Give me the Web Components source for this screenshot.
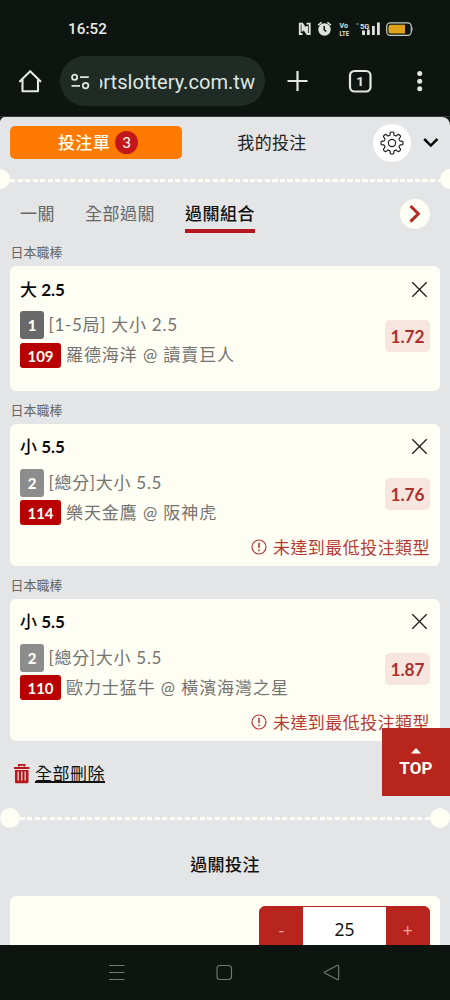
<!DOCTYPE html>
<html lang="zh-Hant">
<head>
<meta charset="utf-8">
<title>投注單</title>
<style>
html,body{margin:0;padding:0;background:#0e1511}
body{width:450px;height:1000px;overflow:hidden;font-family:Lato,"Noto Sans CJK TC",sans-serif}
</style>
</head>
<body>
<phone-screen>
  <status-bar slot="top"></status-bar>
  <browser-bar slot="top"></browser-bar>
  <slip-header count="3"></slip-header>
  <perforated-line edge="0"></perforated-line>
  <mode-tabs></mode-tabs>
  <bet-card league="日本職棒" pick="大 2.5" no="1" tone="#696969" code="109" odds="1.72">
    <span slot="market">[1-5局] 大小 2.5</span><span slot="match">羅德海洋 @ 讀賣巨人</span>
  </bet-card>
  <bet-card league="日本職棒" pick="小 5.5" no="2" tone="#8d8d8d" code="114" odds="1.76" warn="未達到最低投注類型">
    <span slot="market">[總分]大小 5.5</span><span slot="match">樂天金鷹 @ 阪神虎</span>
  </bet-card>
  <bet-card league="日本職棒" pick="小 5.5" no="2" tone="#8d8d8d" code="110" odds="1.87" warn="未達到最低投注類型">
    <span slot="market">[總分]大小 5.5</span><span slot="match">歐力士猛牛 @ 橫濱海灣之星</span>
  </bet-card>
  <delete-all>全部刪除</delete-all>
  <perforated-line edge="10"></perforated-line>
  <stake-panel value="25">過關投注</stake-panel>
  <top-button slot="float">TOP</top-button>
  <nav-bar slot="bottom"></nav-bar>
</phone-screen>
<script>
const define = (name, render) => customElements.define(name, class extends HTMLElement {
  constructor(){ super(); this.attachShadow({mode:'open'}); }
  connectedCallback(){ this.shadowRoot.innerHTML = '<style>*{box-sizing:border-box}:host{box-sizing:border-box}</style>' + render(n => this.getAttribute(n) || ''); }
});

define('phone-screen', () => `
<style>
:host{display:flex;flex-direction:column;width:450px;height:1000px;position:relative;background:#0e1511}
main{height:828px;background:#e3e5e7;overflow:hidden;border-radius:5px 8px 0 0;display:flex;flex-direction:column}
.edge{height:1px;background:#343a37}
</style>
<slot name="top"></slot><div class="edge"></div><main><slot></slot></main><slot name="bottom"></slot><slot name="float"></slot>`);

define('status-bar', () => `
<style>
:host{display:flex;height:58px;align-items:center;padding:0 33px 0 68px;color:#e8ece9;font:500 15.2px Roboto,sans-serif}
.t{flex:1;letter-spacing:.1px}
svg{display:block}
</style>
<span class="t">16:52</span>
<svg width="119" height="16" viewBox="0 0 119 16" fill="none">
<path d="M4.500 13H1.800V2.600h2.400l4.800 7V5M8.500 2.600h3.200V13H9.400L4.400 6v4.500" stroke="#dde2de" stroke-width="1.900"/>
<g fill="#dde2de"><circle cx="26.500" cy="8.500" r="6.200"/><path d="M20.100 4.100l3.500-2.800M32.900 4.100l-3.500-2.800" stroke="#dde2de" stroke-width="1.500"/><path d="M26.200 5v3.700l2 1.800" stroke="#0e1511" stroke-width="1.500" fill="none"/>
<text x="41.500" y="6.800" font-family="Roboto" font-weight="700" font-size="6.800" textLength="8.500" lengthAdjust="spacingAndGlyphs">Vo</text><text x="41.500" y="14.500" font-family="Roboto" font-weight="700" font-size="6.800" textLength="9.500" lengthAdjust="spacingAndGlyphs">LTE</text>
<path d="M58 2h3v2h-3z" opacity=".3"/><text x="62" y="7.500" font-family="Roboto" font-weight="700" font-size="8" textLength="9.500" lengthAdjust="spacingAndGlyphs">5G</text>
<path d="M64 9.500h3V14h-3zM69 8.500h2.800V14H69zM74 5h2.800v9H74zM79 1.500h2.800V14H79z"/></g>
<rect x="88.700" y="1.800" width="24.600" height="12.600" rx="3.600" stroke="#c7ccc8" stroke-width="1.200"/><path d="M92.500 3.700H107v8.800H92.500q-2 0-2-2V5.700q0-2 2-2z" fill="#e0a21b"/><path d="M114 6q1.400 2 0 4.300z" fill="#dde2de"/>
</svg>`);

define('browser-bar', () => `
<style>
:host{display:flex;height:58px;align-items:flex-start;color:#e3e8e4}
svg{display:block;flex:none}
.home{margin:11px 17px 0 18px}
.url{display:flex;flex:none;align-items:center;width:205px;height:50px;margin-top:-2px;border-radius:25px;background:#202b25;padding:1px 10px 0 10px}
.clip{width:155px;margin-left:9px;overflow:hidden;display:flex;justify-content:flex-end;font:400 20.1px/26px Roboto,sans-serif;white-space:nowrap;color:#dfe6e0}
.acts{display:block;margin:10px 0 0 21px}
</style>
<svg class="home" width="25" height="25" viewBox="0 0 25 25" fill="none" stroke="#e3e8e4" stroke-width="2.100" stroke-linejoin="round" stroke-linecap="round"><path d="M4.500 11V22.200H20V11M2 12.300L12.200 2.200 22.400 12.300"/></svg>
<div class="url"><svg width="21" height="18" viewBox="0 0 21 18" fill="none" stroke="#dfe6e0" stroke-width="1.800"><circle cx="4.600" cy="4.200" r="2.600"/><path d="M10 4.200h8.800M1.500 12.800h8.500"/><circle cx="15.600" cy="12.600" r="2.800"/></svg><div class="clip"><span>ortslottery.com.tw</span></div></div>
<svg class="acts" width="150" height="26" viewBox="0 0 150 26"><g fill="none" stroke="#e3e8e4"><path d="M1.500 13h20M11.500 3v20" stroke-width="2.200"/><rect x="64" y="3" width="20.500" height="20.500" rx="4.500" stroke-width="2.200"/></g><text x="74.200" y="18" text-anchor="middle" font-family="Roboto" font-weight="700" font-size="13.500" fill="#e3e8e4">1</text><g fill="#e3e8e4"><circle cx="133.700" cy="5.500" r="2.500"/><circle cx="133.700" cy="13.200" r="2.500"/><circle cx="133.700" cy="20.700" r="2.500"/></g></svg>`);

define('slip-header', a => `
<style>
:host{display:flex;flex:none;height:52px;padding:9px 10px 0;align-items:flex-start;font-size:17px;letter-spacing:.35px}
.on{display:flex;align-items:center;justify-content:center;width:172px;height:33px;background:#ff7a00;color:#fffef4;border-radius:5px;gap:5px;padding-left:4px}
.on span{line-height:32px;font-weight:500}
b{width:23px;height:23px;border-radius:50%;background:#c3161a;font:400 15px/22px Lato;text-align:center;letter-spacing:0}
.off{width:180px;text-align:center;line-height:33px;color:#222}
.gear{width:38px;height:38px;border-radius:50%;background:#fff;display:flex;align-items:center;justify-content:center;margin:-2px 0 0 11px}
.chev{margin:11px 0 0 12px}
</style>
<div class="on"><span>投注單</span><b>${a('count')}</b></div><div class="off">我的投注</div>
<div class="gear"><svg width="26" height="26" viewBox="-13 -13 26 26" fill="none" stroke="#222" stroke-width="1.200" stroke-linejoin="round"><circle r="3.600"/><path id="g"/></svg></div>
<svg class="chev" width="16" height="12" viewBox="0 0 16 12" fill="none" stroke="#0b0b0b" stroke-width="2.500"><path d="M1.200 2l6.600 6.600L14.400 2"/></svg>`);

define('perforated-line', a => `
<style>
:host{display:flex;height:20px;align-items:center;margin:0 ${+a('edge') - 10}px;flex:none}
i{width:20px;height:20px;border-radius:50%;background:#fffef4;flex:none}
u{flex:1;height:3px;margin-top:2px;background:repeating-linear-gradient(90deg,#fffef4 0 5px,transparent 5px 7.500px)}
</style><i></i><u></u><i></i>`);

define('mode-tabs', () => `
<style>
:host{display:flex;flex:none;height:55px;padding:10px 20px 0 20px;align-items:flex-start;font-size:17px;letter-spacing:.5px;color:#666;line-height:30px}
span{height:34px;margin-right:30px}
.on{color:#111;font-weight:500;height:34px;border-bottom:4px solid #b5171c;width:70px;margin:0;white-space:nowrap}
.next{width:30px;height:30px;border-radius:50%;background:#fffef4;display:flex;align-items:center;justify-content:center;margin:0 0 0 auto}
</style>
<span>一關</span><span>全部過關</span><span class="on">過關組合</span>
<div class="next"><svg width="14" height="20" viewBox="0 0 14 20" fill="none" stroke="#b32a25" stroke-width="3"><path d="M2.500 2l7.800 7.800L2.500 17.600"/></svg></div>`);

define('bet-card', a => `
<style>
:host{display:block;padding:0 10px;flex:none}
.lg{font-size:13px;line-height:16px;color:#666;margin:0 .5px 4px;height:18px}
.card{height:${a('warn') ? 142 : 125}px;background:#fffef4;border-radius:6px;padding:10px 10px 0;margin-bottom:${a('warn') ? 11 : 10.500}px}
.head{display:flex;justify-content:space-between;align-items:center;height:26px;font-size:17px;font-weight:700;color:#0a0a0a}
.head>span{padding-bottom:2px}
.head b{font-weight:500}.head em{font-style:normal;font-weight:700}
.head svg{margin-right:2px}
.mid{display:flex;justify-content:space-between;margin-top:8px;height:60px}
.row{display:flex;align-items:center;height:30px;white-space:nowrap;font-size:17px;letter-spacing:.72px;color:#737370}
.row.m{letter-spacing:.92px}
.row span{display:block}
slot{display:block;padding-bottom:3px}
.no{width:24px;height:28px;line-height:29px;font-size:15px;font-weight:900;color:#fffef4;text-align:center;border-radius:3px;letter-spacing:0;margin-right:4.500px}
.code{width:41px;height:25px;line-height:26px;font-size:15px;font-weight:700;color:#fffef4;background:#b80000;text-align:center;border-radius:3px;letter-spacing:0;margin-right:5px}
.odds{width:45px;height:32px;margin-top:10px;border-radius:5px;background:#f7e5e0;color:#a9302c;font-weight:700;font-size:17.300px;line-height:33px;text-align:center}
.warn{display:flex;justify-content:flex-end;align-items:center;height:24px;margin-top:7px;color:#b53b37;font-size:17px;letter-spacing:.45px;gap:6px}
</style>
<div class="lg">${a('league')}</div>
<div class="card">
<div class="head"><span><b>${a('pick').split(' ')[0]}</b> <em>${a('pick').split(' ')[1]}</em></span><svg width="17" height="17" viewBox="0 0 17 17" stroke="#1c1c1c" stroke-width="1.300"><path d="M1.300 1.300l14.400 14.400M15.700 1.300L1.300 15.700"/></svg></div>
<div class="mid"><div><div class="row"><span class="no" style="background:${a('tone')}">${a('no')}</span><slot name="market"></slot></div><div class="row m"><span class="code">${a('code')}</span><slot name="match"></slot></div></div>
<div class="odds">${a('odds')}</div></div>
${a('warn') ? `<div class="warn"><svg width="16" height="16" viewBox="0 0 16 16" fill="none" stroke="#b53b37" stroke-width="1.200"><circle cx="8" cy="8" r="7"/><path d="M8 3.800v5.200M8 10.500v1.700" stroke-width="1.600"/></svg><span>${a('warn')}</span></div>` : ''}
</div>`);

define('delete-all', () => `
<style>
:host{display:flex;height:56px;padding:7px 0 0 14px;gap:5px;align-items:flex-start;font-size:17px;letter-spacing:.5px;color:#111;flex:none}
svg{margin-top:5px}
span{line-height:30px;text-decoration:underline;text-decoration-thickness:1.500px;text-underline-offset:1px;text-decoration-skip-ink:none}
</style>
<svg width="16" height="20" viewBox="0 0 16 20"><path d="M5 2.500V.8h5.500v1.700M0 4h15.500" fill="none" stroke="#b5171c" stroke-width="2"/><path d="M1 6h13.500v12q0 1.300-1.300 1.300H2.300Q1 19.300 1 18z" fill="#b5171c"/><path d="M4.200 7.500v9M7.700 7.500v9M11.200 7.500v9" stroke="#f0d9d6" stroke-width="1.300"/></svg><span><slot></slot></span>`);

define('stake-panel', a => `
<style>
:host{display:block;padding:21px 10px 0;flex:none}
h3{margin:0;font-size:17px;font-weight:500;letter-spacing:.4px;line-height:31px;height:30px;text-align:center;color:#111}
.card{height:90px;margin-top:17px;background:#fffef4;border-radius:6px;display:flex;justify-content:flex-end;padding:10px 10px 0}
.step{display:flex;width:171px;height:48px;border:1px solid #b7251e;border-radius:6px;background:#b7251e;overflow:hidden;color:#e9a8a2;font:400 17px/48px Lato;text-align:center}
.step span{width:43px}
.step b{width:84px;background:#fff;color:#151515;font:400 17.500px/44px "Noto Sans"}
</style>
<h3><slot></slot></h3><div class="card"><div class="step"><span>-</span><b>${a('value')}</b><span>+</span></div></div>`);

define('top-button', () => `
<style>
:host{position:absolute;left:382px;top:728px;width:68px;height:68px;background:#b7251d;color:#fffef4;display:flex;flex-direction:column;align-items:center;font:700 17px/20px Roboto,sans-serif;letter-spacing:.1px}
svg{margin:19px 0 4px}
</style><svg width="10" height="7" viewBox="0 0 10 7"><path d="M0 6.500L5 1l5 5.500z" fill="#fffef4"/></svg><span><slot></slot></span>`);

define('nav-bar', () => `
<style>
:host{display:flex;height:55px;background:#0e1511;flex:none}
svg{display:block}
</style><svg width="450" height="55" viewBox="0 0 450 55" fill="none" stroke="#737875" stroke-width="1.100"><path d="M109 20.500h15.500M109 27.500h15.500M109 34.500h15.500"/><rect x="217" y="20.500" width="14.500" height="14" rx="3"/><path d="M324.800 27q-.6.500 0 1l12.200 6.500q1.700.5 1.700-1v-12q0-1.500-1.700-1z"/></svg>`);

/* Gear outline: eight rounded teeth traced around a circle */
const gear = document.querySelector('slip-header').shadowRoot.getElementById('g');
const pts = [];
for (let i = 0; i < 160; i++) {
  const t = i / 160 * Math.PI * 2, r = 9.500 + 1.500 * Math.tanh(3 * Math.cos(8 * t));
  pts.push((r * Math.cos(t)).toFixed(2) + ' ' + (r * Math.sin(t)).toFixed(2));
}
gear.setAttribute('d', 'M' + pts.join('L') + 'Z');
</script>
</body>
</html>
